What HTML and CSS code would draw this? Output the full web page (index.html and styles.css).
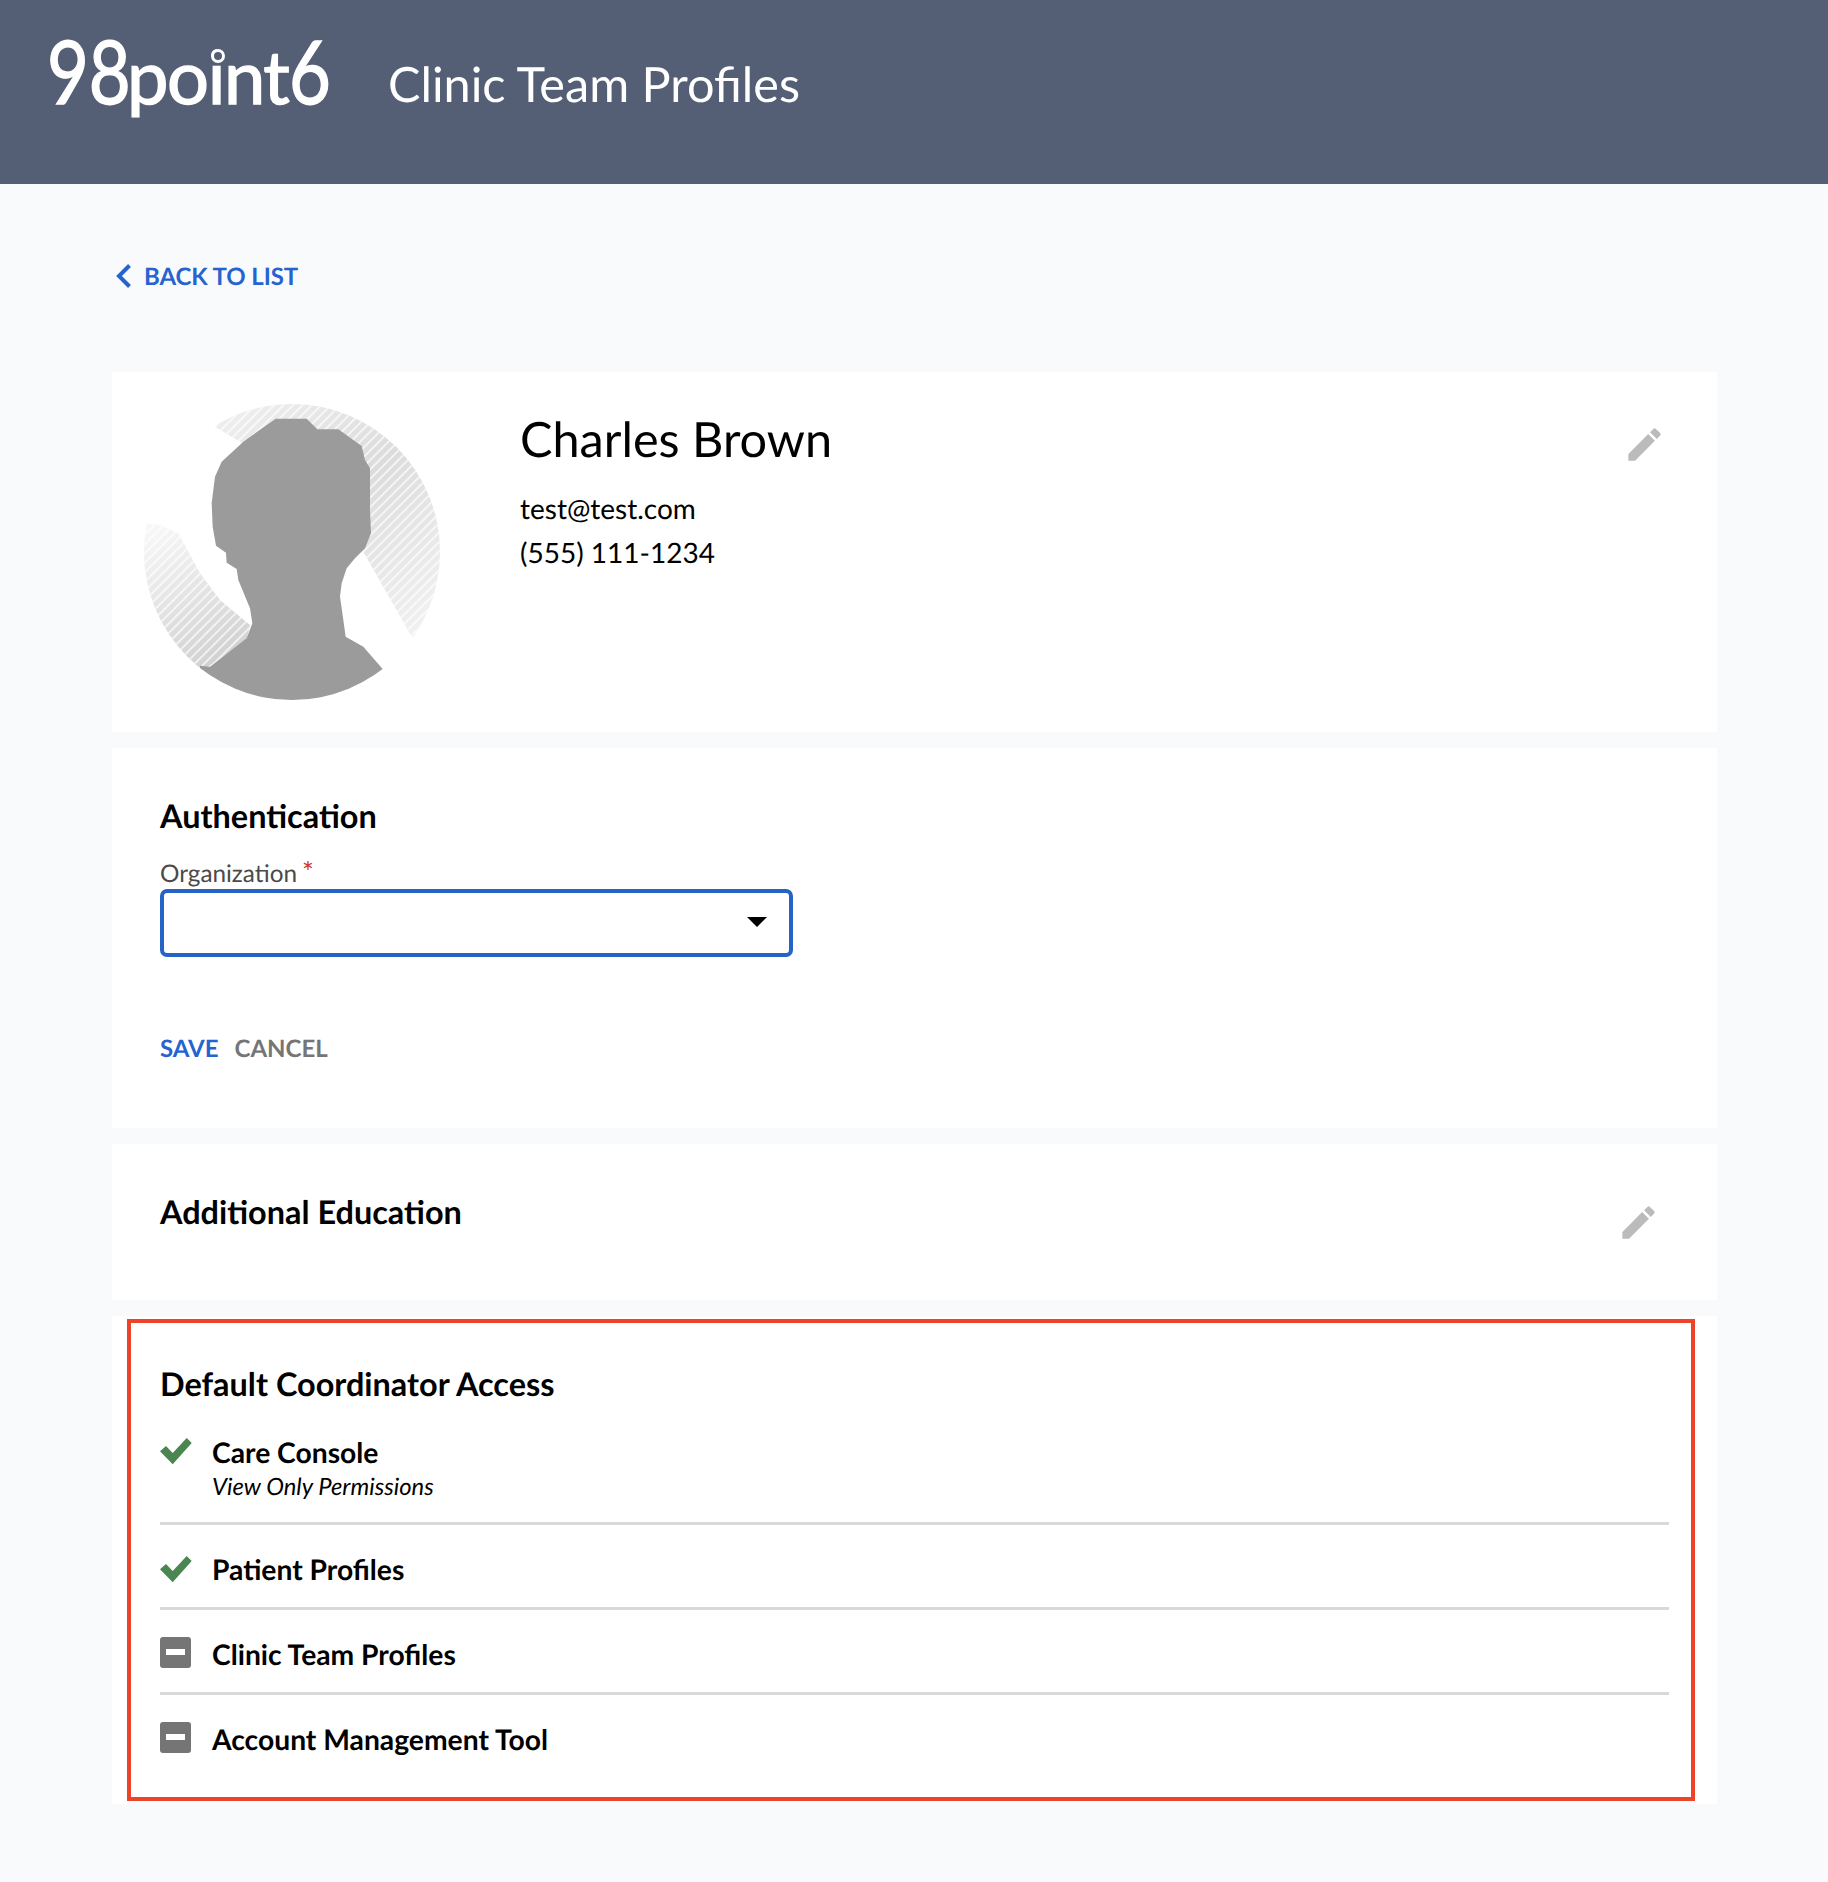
FILE: index.html
```html
<!DOCTYPE html>
<html lang="en">
<head>
<meta charset="utf-8">
<title>Clinic Team Profiles</title>
<link rel="stylesheet" href="styles.css">
</head>
<body>
<header class="topbar">
  <div class="logo"><div class="logo-text"><span class="logo-num logo-num-two">98</span>point<span class="logo-num logo-num-one">6</span></div><span class="logo-ring"></span></div>
  <h1 class="app-title">Clinic Team Profiles</h1>
</header>
<main class="page">
  <a class="back" href="#">
    <svg class="back-icon" viewBox="0 0 16 24"><path d="M13.500 1.500 3 12l10.500 10.500" fill="none" stroke="#2563d0" stroke-width="4"/></svg>
    <span>BACK TO LIST</span>
  </a>

  <section class="card card-profile">
    <svg class="avatar" viewBox="102 102 888 888">
      <defs>
        <clipPath id="round"><circle cx="546" cy="546" r="444"/></clipPath>
        <linearGradient id="shadeR" gradientUnits="userSpaceOnUse" x1="420" y1="120" x2="960" y2="760">
          <stop offset="0" stop-color="#ededed"/><stop offset=".45" stop-color="#dcdcdc"/><stop offset="1" stop-color="#f1f1f1"/>
        </linearGradient>
        <linearGradient id="shadeL" gradientUnits="userSpaceOnUse" x1="160" y1="470" x2="340" y2="860">
          <stop offset="0" stop-color="#f7f7f7"/><stop offset=".55" stop-color="#e2e2e2"/><stop offset="1" stop-color="#d2d2d2"/>
        </linearGradient>
        <pattern id="hatch" patternUnits="userSpaceOnUse" width="20" height="20" patternTransform="rotate(-45)">
          <rect width="20" height="5.500" fill="#fff" fill-opacity=".7"/>
        </pattern>
      </defs>
      <g clip-path="url(#round)">
        <path d="M315 170 390 215 700 500 760 545 905 800 1000 800V100H315Z" fill="url(#shadeR)"/>
        <path d="M100 460 150 465 205 490 270 610 330 690 420 765 410 810 280 900H100Z" fill="url(#shadeL)"/>
        <path d="M315 170 390 215 700 500 760 545 905 800 1000 800V100H315Z" fill="url(#hatch)"/>
        <path d="M100 460 150 465 205 490 270 610 330 690 420 765 410 810 280 900H100Z" fill="url(#hatch)"/>
        <path d="M497 146H590L622 178H685L755 228 765 270 780 295V420L783 490 765 535 735 565 710 595 695 640 690 680 700 750 707 800 760 830 818 897V1000H270V887L300 890 410 805 427 760 420 715 385 630 380 597 350 578 348 548 318 527 308 470 305 400 315 320 335 275 400 215Z" fill="#9b9b9b"/>
      </g>
    </svg>
    <div class="person">
      <h2 class="person-name">Charles Brown</h2>
      <p class="person-line">test@test.com</p>
      <p class="person-line">(555) 111-1234</p>
    </div>
    <svg class="pencil pencil-profile" viewBox="0 0 24 24"><path d="M3 17.25V21h3.75L17.81 9.94l-3.75-3.75L3 17.25zM20.71 7.04c.39-.39.39-1.02 0-1.41l-2.34-2.34c-.39-.39-1.02-.39-1.41 0l-1.83 1.83 3.75 3.75 1.83-1.83z"/></svg>
  </section>

  <section class="card card-auth">
    <h3 class="section-title">Authentication</h3>
    <label class="field-label">Organization<span class="req">*</span></label>
    <div class="select"><span class="caret"></span></div>
    <div class="actions">
      <a class="action action-save" href="#">SAVE</a>
      <a class="action action-cancel" href="#">CANCEL</a>
    </div>
  </section>

  <section class="card card-edu">
    <h3 class="section-title">Additional Education</h3>
    <svg class="pencil pencil-edu" viewBox="0 0 24 24"><path d="M3 17.25V21h3.75L17.81 9.94l-3.75-3.75L3 17.25zM20.71 7.04c.39-.39.39-1.02 0-1.41l-2.34-2.34c-.39-.39-1.02-.39-1.41 0l-1.83 1.83 3.75 3.75 1.83-1.83z"/></svg>
  </section>

  <section class="card card-access">
    <div class="highlight"></div>
    <h3 class="section-title">Default Coordinator Access</h3>
    <ul class="access-list">
      <li class="access-row access-first">
        <svg class="mark" viewBox="0 0 32 27"><path d="M0 13.300 6 8 12.700 15 26.700 0 31.700 5 12.700 26.300Z" fill="#4b8551"/></svg>
        <div><div class="access-name">Care Console</div><div class="access-note">View Only Permissions</div></div>
      </li>
      <li class="access-row">
        <svg class="mark" viewBox="0 0 32 27"><path d="M0 13.300 6 8 12.700 15 26.700 0 31.700 5 12.700 26.300Z" fill="#4b8551"/></svg>
        <div class="access-name">Patient Profiles</div>
      </li>
      <li class="access-row">
        <span class="minus"></span>
        <div class="access-name">Clinic Team Profiles</div>
      </li>
      <li class="access-row">
        <span class="minus"></span>
        <div class="access-name">Account Management Tool</div>
      </li>
    </ul>
  </section>
</main>
</body>
</html>
```
FILE: styles.css
```css
* { box-sizing: border-box; }
html, body { margin: 0; padding: 0; }
body {
  min-height: 1882px;
  background: #f9fafc;
  color: #000;
  font-family: Lato, "Open Sans", sans-serif;
  text-rendering: geometricPrecision;
}
.topbar {
  height: 184px;
  background: #545f75;
  color: #fff;
  display: flex;
  align-items: flex-start;
  padding-left: 47px;
}
.logo { position: relative; width: 341px; height: 184px; }
.logo-text {
  display: flex;
  align-items: baseline;
  white-space: nowrap;
  font-size: 74px;
  line-height: 88px;
  letter-spacing: -1.4px;
  margin-top: 26px;
  -webkit-text-stroke: 1.4px #fff;
}
.logo-num {
  display: block;
  font-size: 88px;
  letter-spacing: 0;
  transform: scaleX(.82);
  transform-origin: left center;
}
.logo-num-two { width: 80px; }
.logo-num-one { width: 42px; }
.logo-ring {
  position: absolute;
  left: 164px;
  top: 49px;
  width: 14px;
  height: 14px;
  border: 3px solid #fff;
  border-radius: 50%;
  background: #545f75;
}
.app-title {
  margin: 54px 0 0;
  font-size: 48.6px;
  line-height: 60px;
  font-weight: 400;
}
.page { padding: 0 111px 0 112px; }
.back {
  display: flex;
  align-items: center;
  gap: 12px;
  height: 188px;
  padding: 0 0 4px 4px;
  color: #2563d0;
  font-size: 24px;
  font-weight: 700;
  letter-spacing: -.1px;
  text-decoration: none;
}
.back-icon { width: 16px; height: 24px; }
.card { background: #fff; margin-bottom: 16px; position: relative; }
.card-profile { display: flex; height: 360px; padding: 32px; }
.avatar { width: 296px; height: 296px; flex: none; }
.person { margin-left: 80px; flex: 1; }
.person-name { margin: 6px 0 18px; font-size: 48.6px; line-height: 58px; font-weight: 400; }
.person-line { margin: 0; font-size: 28px; line-height: 44px; }
.pencil { fill: #bbb; width: 43px; height: 43px; flex: none; }
.pencil-profile { margin: 19px 19px 0 0; }
.card-auth { height: 380px; padding: 48px 48px 0; }
.section-title { margin: 0; font-size: 32.45px; line-height: 40px; font-weight: 700; }
.field-label { display: block; margin-top: 23px; height: 30px; color: #4a4a4a; font-size: 24.3px; line-height: 30px; }
.req { color: #d0342c; font-size: 28px; line-height: 0; margin-left: 5px; vertical-align: 0; }
.select {
  width: 633px;
  height: 68px;
  border: 4px solid #2563c4;
  border-radius: 7px;
  display: flex;
  align-items: center;
  justify-content: flex-end;
  padding: 0 22px 2px 0;
}
.caret { width: 0; height: 0; border-left: 10px solid transparent; border-right: 10px solid transparent; border-top: 10px solid #000; }
.actions { display: flex; gap: 16px; margin-top: 77px; }
.action { font-size: 24px; line-height: 30px; font-weight: 700; text-decoration: none; }
.action-save { color: #2563d0; }
.action-cancel { color: #757575; }
.card-edu { height: 156px; padding: 48px; display: flex; justify-content: space-between; }
.pencil-edu { margin: 9px 9px 0 0; }
.card-access { height: 488px; padding: 48px 48px 0; }
.highlight {
  position: absolute;
  left: 15px;
  top: 3px;
  width: 1568px;
  height: 482px;
  border: 4px solid #ee4328;
  pointer-events: none;
}
.access-list { list-style: none; margin: 0; padding: 0; width: 1509px; }
.access-row { display: flex; align-items: flex-start; border-bottom: 3px solid #d9d9d9; height: 85px; padding-top: 27px; }
.access-first { height: 121px; padding-top: 31px; }
.access-row:last-child { border-bottom: 0; }
.mark { width: 32px; height: 27px; flex: none; margin-right: 20px; margin-top: 3.5px; }
.access-first .mark { margin-top: 3px; }
.minus { width: 31px; height: 31px; flex: none; margin-right: 21px; background: #757575; border-radius: 3px; position: relative; }
.minus::after { content: ""; position: absolute; left: 6px; right: 6px; top: 12px; height: 6px; background: #fff; }
.access-name { font-size: 28.25px; line-height: 36px; font-weight: 700; }
.access-note { font-size: 23.8px; line-height: 32px; font-style: italic; }
```
